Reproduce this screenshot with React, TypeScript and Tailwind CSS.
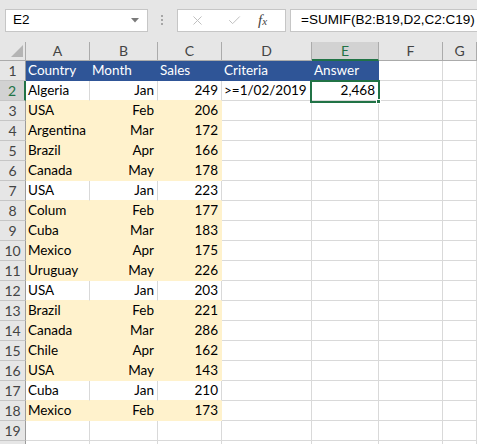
import { Check, X } from 'lucide-react'

type Row = [string, string, number | string]

const data: Row[] = [
  ['Algeria', 'Jan', 249],
  ['USA', 'Feb', 206],
  ['Argentina', 'Mar', 172],
  ['Brazil', 'Apr', 166],
  ['Canada', 'May', 178],
  ['USA', 'Jan', 223],
  ['Colum', 'Feb', 177],
  ['Cuba', 'Mar', 183],
  ['Mexico', 'Apr', 175],
  ['Uruguay', 'May', 226],
  ['USA', 'Jan', 203],
  ['Brazil', 'Feb', 221],
  ['Canada', 'Mar', 286],
  ['Chile', 'Apr', 162],
  ['USA', 'May', 143],
  ['Cuba', 'Jan', 210],
  ['Mexico', 'Feb', 173],
]

const columns = ['A', 'B', 'C', 'D', 'E', 'F', 'G']

const cellFont = { fontFamily: 'Lato, "Open Sans", sans-serif' }

function ColHeader({ label }: { label: string }) {
  if (label === 'E') {
    return (
      <div className="h-[19px] bg-[#d2d2d2] border-r border-r-[#ababab] border-b-2 border-b-[#217346] flex items-center justify-center text-[14px] text-[#217346] leading-none">
        {label}
      </div>
    )
  }
  return (
    <div className="h-[19px] bg-[#e6e6e6] border-r border-b border-r-[#ababab] border-b-[#ababab] flex items-center justify-center text-[14px] text-[#444] leading-none">
      {label}
    </div>
  )
}

function RowHeader({ n }: { n?: number }) {
  if (n === 2) {
    return (
      <div className="h-[20px] bg-[#d2d2d2] border-r-2 border-r-[#217346] border-b border-b-[#c6c6c6] flex items-center justify-center text-[14px] text-[#217346] leading-none">
        {n}
      </div>
    )
  }
  return (
    <div className="h-[20px] bg-[#e6e6e6] border-r border-b border-r-[#9b9b9b] border-b-[#c6c6c6] flex items-center justify-center text-[14px] text-[#444] leading-none">
      {n}
    </div>
  )
}

function Cell({
  kind,
  right,
  children,
}: {
  kind: 'blue' | 'cream' | 'white' | 'whiteOverCream'
  right?: boolean
  children?: React.ReactNode
}) {
  const align = right ? 'justify-end pr-[3px]' : 'justify-start pl-[2px]'
  let look = 'border-r border-b border-[#d9d9d9] text-black'
  if (kind === 'blue') look = 'bg-[#2f5597] border-r border-b border-[#2f5597] text-white'
  if (kind === 'cream') look = 'bg-[#fff2cc] border-r border-b border-[#fff2cc] text-black'
  if (kind === 'whiteOverCream')
    look = 'border-r border-b border-r-[#d9d9d9] border-b-[#fff2cc] text-black'
  return (
    <div
      className={`h-[20px] flex items-end pb-[3px] text-[13.5px] leading-none whitespace-nowrap overflow-visible ${align} ${look}`}
    >
      {children}
    </div>
  )
}

export default function App() {
  return (
    <div className="relative w-[477px] h-[444px] overflow-hidden bg-white" style={cellFont}>
      {/* formula bar */}
      <div
        className="h-[42px] bg-[#e6e6e6] flex items-start pt-[9px]"
        style={{ fontFamily: '"Liberation Sans", Arial, sans-serif' }}
      >
        <div className="ml-[5px] w-[143px] h-[23px] bg-white border border-[#c6c6c6] flex items-center justify-between pl-[7px] pr-[8px] text-[13.5px] text-black">
          <span>E2</span>
          <svg width="8" height="5" viewBox="0 0 8 5">
            <path d="M0 0 L8 0 L4 4.5 Z" fill="#7a7a7a" />
          </svg>
        </div>
        <div className="ml-[13px] mt-[6px] flex flex-col gap-[2px]">
          <div className="w-[2px] h-[2px] bg-[#a6a6a6]" />
          <div className="w-[2px] h-[2px] bg-[#a6a6a6]" />
          <div className="w-[2px] h-[2px] bg-[#a6a6a6]" />
        </div>
        <div className="ml-[14px] w-[109px] h-[23px] bg-white border border-[#c6c6c6] flex items-center">
          <X size={15} strokeWidth={1.6} color="#c0c0c0" className="ml-[12px]" />
          <Check size={15} strokeWidth={1.6} color="#c0c0c0" className="ml-[22px]" />
          <span
            className="ml-[16px] text-[15px] italic text-[#444]"
            style={{ fontFamily: '"Liberation Serif", serif' }}
          >
            f<span className="text-[11px]">x</span>
          </span>
        </div>
        <div className="ml-[4px] flex-1 h-[23px] bg-white border border-r-0 border-[#c6c6c6] flex items-center pl-[10px] text-[13.5px] text-black whitespace-nowrap overflow-hidden">
          =SUMIF(B2:B19,D2,C2:C19)
        </div>
      </div>

      {/* sheet */}
      <div className="grid grid-cols-[26px_64px_68px_64px_90px_67px_64px_1fr]">
        <div className="h-[19px] bg-[#e6e6e6] border-r border-b border-[#ababab] flex items-end justify-end pr-[2px] pb-[3px]">
          <svg width="12" height="12" viewBox="0 0 12 12">
            <path d="M12 0 L12 12 L0 12 Z" fill="#b4b4b4" />
          </svg>
        </div>
        {columns.map((c) => (
          <ColHeader key={c} label={c} />
        ))}

        {/* row 1 */}
        <RowHeader n={1} />
        <Cell kind="blue">Country</Cell>
        <Cell kind="blue">Month</Cell>
        <Cell kind="blue">Sales</Cell>
        <Cell kind="blue">Criteria</Cell>
        <Cell kind="blue">Answer</Cell>
        <Cell kind="white" />
        <Cell kind="white" />

        {data.map((r, i) => {
          const n = i + 2
          const cream = r[1] !== 'Jan'
          const next = data[i + 1]
          const nextCream = next ? next[1] !== 'Jan' : false
          const kind = cream ? 'cream' : nextCream ? 'whiteOverCream' : 'white'
          return [
            <RowHeader key={`h${n}`} n={n} />,
            <Cell key={`a${n}`} kind={kind}>
              {r[0]}
            </Cell>,
            <Cell key={`b${n}`} kind={kind} right>
              {r[1]}
            </Cell>,
            <Cell key={`c${n}`} kind={kind} right>
              {r[2]}
            </Cell>,
            <Cell key={`d${n}`} kind="white">
              {n === 2 ? '>=1/02/2019' : null}
            </Cell>,
            <Cell key={`e${n}`} kind="white" right>
              {n === 2 ? '2,468' : null}
            </Cell>,
            <Cell key={`f${n}`} kind="white" />,
            <Cell key={`g${n}`} kind="white" />,
          ]
        })}

        <RowHeader n={19} />
        <Cell kind="white" />
        <Cell kind="white" />
        <Cell kind="white" />
        <Cell kind="white" />
        <Cell kind="white" />
        <Cell kind="white" />
        <Cell kind="white" />
        <RowHeader />
        <Cell kind="white" />
        <Cell kind="white" />
        <Cell kind="white" />
        <Cell kind="white" />
        <Cell kind="white" />
        <Cell kind="white" />
        <Cell kind="white" />
      </div>

      {/* active cell E2 */}
      <div className="absolute left-[310px] top-[80px] w-[70px] h-[23px] border-2 border-[#217346] pointer-events-none" />
      <div className="absolute left-[376px] top-[99px] w-[5px] h-[5px] bg-[#217346] border border-white pointer-events-none" />
    </div>
  )
}
